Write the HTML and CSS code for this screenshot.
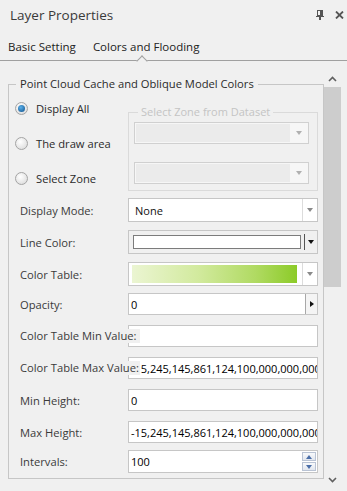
FILE: index.html
```html
<!DOCTYPE html>
<html>
<head>
    <title>Layer Properties</title>
    <link rel="stylesheet" href="styles.css">
</head>
<body>
    <div class="titlebar">
        <span class="title">Layer Properties</span>
        <span class="title-icons">
            <svg width="8" height="10" viewBox="0 0 8 10">
                <rect x="1.5" y="0.5" width="5" height="5" fill="none" stroke="#555"/>
                <rect x="4" y="0.5" width="2" height="5" fill="#555"/>
                <rect x="0" y="6" width="8" height="1" fill="#555"/>
                <rect x="3" y="7" width="2" height="3" fill="#555"/>
            </svg>
            <svg width="9" height="8" viewBox="0 0 9 8">
                <path d="M1 0.5 L8 7.5 M8 0.5 L1 7.5" stroke="#555" stroke-width="1.8"/>
            </svg>
        </span>
    </div>

    <div class="tabs">
        <span class="tab">Basic Setting</span>
        <span class="tab active">Colors and Flooding</span>
    </div>

    <div class="main">
        <div class="content">
            <fieldset class="group">
                <legend>Point Cloud Cache and Oblique Model Colors</legend>

                <div class="zone">
                    <div class="radios">
                        <label class="radio"><span class="dot checked"></span>Display All</label>
                        <label class="radio"><span class="dot"></span>The draw area</label>
                        <label class="radio"><span class="dot"></span>Select Zone</label>
                    </div>
                    <fieldset class="subgroup">
                        <legend>Select Zone from Dataset</legend>
                        <div class="combo disabled"><span class="combo-text"></span><span class="combo-btn"><i class="arrow"></i></span></div>
                        <div class="combo disabled second"><span class="combo-text"></span><span class="combo-btn"><i class="arrow"></i></span></div>
                    </fieldset>
                </div>

                <div class="row first tall">
                    <span class="label">Display Mode:</span>
                    <div class="combo"><span class="combo-text">None</span><span class="combo-btn"><i class="arrow"></i></span></div>
                </div>
                <div class="row tall">
                    <span class="label">Line Color:</span>
                    <div class="color-pick">
                        <span class="swatch"></span>
                        <span class="pick-btn"><i class="arrow dark"></i></span>
                    </div>
                </div>
                <div class="row tall">
                    <span class="label">Color Table:</span>
                    <div class="combo"><span class="combo-text"><span class="ramp"></span></span><span class="combo-btn"><i class="arrow"></i></span></div>
                </div>
                <div class="row tight">
                    <span class="label">Opacity:</span>
                    <div class="field">
                        <span class="field-text">0</span>
                        <span class="side-btn"><i class="tri-right"></i></span>
                    </div>
                </div>
                <div class="row">
                    <span class="label over">Color Table Min Value:</span>
                    <div class="field"><span class="field-text"></span></div>
                </div>
                <div class="row">
                    <span class="label over">Color Table Max Value:</span>
                    <div class="field"><span class="field-text">-15,245,145,861,124,100,000,000,000,000</span></div>
                </div>
                <div class="row">
                    <span class="label">Min Height:</span>
                    <div class="field"><span class="field-text">0</span></div>
                </div>
                <div class="row">
                    <span class="label">Max Height:</span>
                    <div class="field"><span class="field-text">-15,245,145,861,124,100,000,000,000,000</span></div>
                </div>
                <div class="row last">
                    <span class="label">Intervals:</span>
                    <div class="field spin">
                        <span class="field-text">100</span>
                        <span class="spin-btns">
                            <span class="spin-btn"><i class="tri-up"></i></span>
                            <span class="spin-btn"><i class="tri-down"></i></span>
                        </span>
                    </div>
                </div>
            </fieldset>
        </div>

        <div class="scrollbar">
            <div class="sb-arrow">
                <svg width="9" height="6" viewBox="0 0 9 6"><path d="M1 5 L4.5 1.5 L8 5" fill="none" stroke="#606060" stroke-width="1.6"/></svg>
            </div>
            <div class="sb-track"><div class="sb-thumb"></div></div>
            <div class="sb-arrow">
                <svg width="9" height="6" viewBox="0 0 9 6"><path d="M1 1 L4.5 4.5 L8 1" fill="none" stroke="#606060" stroke-width="1.6"/></svg>
            </div>
        </div>
    </div>
</body>
</html>
```

FILE: styles.css
```css
body {
    margin: 0;
    width: 347px;
    height: 491px;
    overflow: hidden;
    background-color: #f0f0f0;
    font-family: "Open Sans", "Noto Sans", sans-serif;
    font-size: 11px;
    color: #333;
}

/* title bar */
.titlebar {
    height: 30px;
    display: flex;
    align-items: center;
    padding-left: 10px;
}
.title {
    font-size: 13.5px;
    color: #3a3a3a;
    flex: 1;
}
.title-icons {
    display: flex;
    align-items: center;
    gap: 11px;
    padding-right: 3px;
}

/* tabs */
.tabs {
    height: 30px;
    display: flex;
    align-items: center;
    gap: 17px;
    padding-left: 8px;
    border-bottom: 1px solid #a0a0a0;
    position: relative;
    font-size: 11.5px;
    color: #222;
}
.tab {
    padding-top: 2px;
}
.tab.active::after {
    content: "";
    position: absolute;
    left: 138px;
    bottom: -5px;
    width: 7px;
    height: 7px;
    background-color: #f0f0f0;
    border-left: 1px solid #a0a0a0;
    border-top: 1px solid #a0a0a0;
    transform: rotate(45deg);
}

/* main area */
.main {
    display: flex;
    height: 430px;
}
.content {
    width: 316px;
    padding: 15px 0 0 8px;
}
.group {
    box-sizing: border-box;
    width: 316px;
    margin: 0;
    padding: 0 5px 5px 11px;
    border: 1px solid #c6c6c6;
    min-width: 0;
}
.group > legend {
    padding: 0 4px;
    margin-left: -4px;
    line-height: 16px;
    font-size: 11.2px;
    color: #2a2a2a;
}

/* zone selection */
.zone {
    display: flex;
}
.radios {
    width: 113px;
    flex: none;
    margin-left: -5px;
    padding-top: 6px;
    display: flex;
    flex-direction: column;
    gap: 15px;
}
.radio {
    height: 20px;
    display: flex;
    align-items: center;
    gap: 8px;
    font-size: 11.2px;
    color: #2a2a2a;
}
.dot {
    box-sizing: border-box;
    width: 13px;
    height: 13px;
    border-radius: 50%;
    border: 1px solid #a4a4a4;
    background: radial-gradient(circle at 40% 35%, #ffffff, #d6d6d6);
    display: flex;
    align-items: center;
    justify-content: center;
}
.dot.checked::after {
    content: "";
    width: 7px;
    height: 7px;
    border-radius: 50%;
    background: radial-gradient(circle at 40% 35%, #5ab0ea, #0e4f8a);
}
.subgroup {
    box-sizing: border-box;
    width: 190px;
    flex: none;
    margin: 12px 0 0 0;
    padding: 0 8px 6px 5px;
    border: 1px solid #dadada;
    min-width: 0;
}
.subgroup > legend {
    padding: 0 3px;
    margin-left: 4px;
    line-height: 16px;
    color: #c4c4c4;
}

/* combo boxes */
.combo {
    box-sizing: border-box;
    width: 190px;
    height: 24px;
    display: flex;
    border: 1px solid #c6c6c6;
    background-color: #fff;
}
.combo-text {
    flex: 1;
    display: flex;
    align-items: center;
    padding-left: 6px;
    color: #111;
}
.combo-btn {
    width: 14px;
    border-left: 1px solid #dcdcdc;
    display: flex;
    align-items: center;
    justify-content: center;
}
.arrow {
    width: 0;
    height: 0;
    border-left: 3.5px solid transparent;
    border-right: 3.5px solid transparent;
    border-top: 4px solid #8a8a8a;
}
.arrow.dark {
    border-top-color: #111;
}
.combo.disabled {
    width: 175px;
    height: 22px;
    margin-top: 2px;
    border-color: #d0d0d0;
    background-color: #f6f6f6;
}
.combo.disabled .combo-text {
    background-color: #ebebeb;
    margin: 1px 0 1px 1px;
}
.combo.disabled .combo-btn {
    width: 18px;
    border-left: none;
}
.combo.disabled .arrow {
    border-top-color: #b0b0b0;
}
.combo.second {
    margin-top: 18px;
}
.ramp {
    width: 165px;
    height: 18px;
    margin-left: -3px;
    margin-right: 5px;
    background: linear-gradient(to right, #ebf5d2, #d2ea9e 40%, #b0da62 75%, #8ccb28);
}

/* form rows */
.row {
    display: flex;
    align-items: center;
    height: 22px;
    margin-top: 10px;
}
.row.tall {
    height: 24px;
    margin-top: 8px;
}
.row.first {
    margin-top: 7px;
}
.row.tight {
    margin-top: 7px;
}
.row.last {
    height: 23px;
    margin-top: 7px;
}
.label {
    width: 108px;
    flex: none;
    color: #3a3a3a;
    font-size: 11.2px;
    white-space: nowrap;
}
.label.over {
    width: 120px;
    margin-right: -12px;
    line-height: 14px;
    background-color: #f0f0f0;
    z-index: 1;
    overflow: hidden;
}

.color-pick {
    box-sizing: border-box;
    width: 190px;
    height: 24px;
    display: flex;
    align-items: center;
    border: 1px solid #c6c6c6;
    background-color: #f0f0f0;
    padding-left: 4px;
}
.swatch {
    box-sizing: border-box;
    width: 168px;
    height: 14px;
    background-color: #fff;
    border: 1px solid #7c7c7c;
}
.pick-btn {
    height: 16px;
    margin-left: 3px;
    flex: 1;
    border-left: 1px solid #555;
    display: flex;
    align-items: center;
    justify-content: center;
}

.field {
    box-sizing: border-box;
    width: 190px;
    height: 22px;
    display: flex;
    border: 1px solid #c6c6c6;
    background-color: #fff;
    overflow: hidden;
}
.field-text {
    flex: 1;
    min-width: 0;
    display: flex;
    align-items: center;
    padding-left: 2px;
    font-size: 11px;
    color: #000;
    white-space: nowrap;
    overflow: hidden;
}
.side-btn {
    width: 11px;
    border-left: 1px solid #a8a8a8;
    background-color: #f4f4f4;
    display: flex;
    align-items: center;
    justify-content: center;
}
.tri-right {
    width: 0;
    height: 0;
    border-top: 3.5px solid transparent;
    border-bottom: 3.5px solid transparent;
    border-left: 4px solid #111;
}
.field.spin {
    height: 23px;
}
.spin-btns {
    display: flex;
    flex-direction: column;
    gap: 1px;
    padding: 1px 1px 1px 0;
}
.spin-btn {
    box-sizing: border-box;
    width: 14px;
    flex: 1;
    border: 1px solid #b9c3d4;
    background: linear-gradient(#f8f9fb, #e2e7ef);
    display: flex;
    align-items: center;
    justify-content: center;
}
.tri-up, .tri-down {
    width: 0;
    height: 0;
    border-left: 3.5px solid transparent;
    border-right: 3.5px solid transparent;
}
.tri-up {
    border-bottom: 4px solid #4a6ea8;
}
.tri-down {
    border-top: 4px solid #4a6ea8;
}

/* scrollbar */
.scrollbar {
    width: 17px;
    height: 418px;
    margin-top: 9px;
    display: flex;
    flex-direction: column;
}
.sb-arrow {
    height: 17px;
    display: flex;
    align-items: center;
    justify-content: center;
}
.sb-track {
    flex: 1;
}
.sb-thumb {
    height: 200px;
    background-color: #cdcdcd;
}
```
